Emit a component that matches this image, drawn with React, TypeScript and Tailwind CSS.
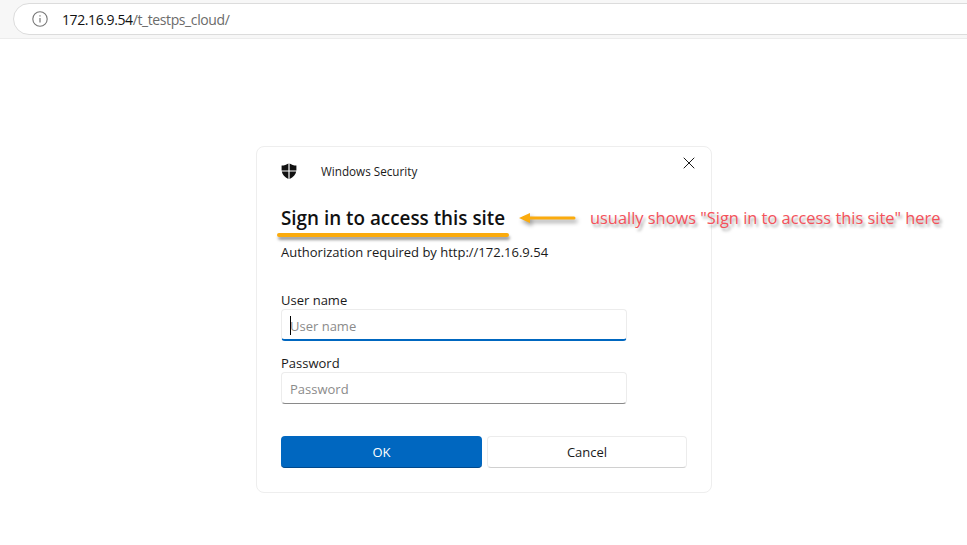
import { X } from 'lucide-react';

const font = "[font-family:'Open_Sans','Noto_Sans',sans-serif]";

function ShieldIcon() {
    return (
        <svg width="16" height="16" viewBox="0 0 16 16" className="-mt-[2px] block">
            <path
                fill="#111"
                d="M7.4 0.4C5.6 1.7 3.2 2.4 0.6 2.5V7.4H7.4ZM8.6 0.4V7.4H15.4V2.5C12.8 2.4 10.4 1.7 8.6 0.4ZM0.8 8.6C1.4 12 3.7 14.4 7.4 15.9V8.6ZM8.6 8.6V15.9C12.3 14.4 14.6 12 15.2 8.6Z"
            />
        </svg>
    );
}

function InfoIcon() {
    return (
        <svg width="16" height="16" viewBox="0 0 16 16" fill="none" className="block">
            <circle cx="8" cy="8" r="7.2" stroke="#777" strokeWidth="1.1" />
            <path d="M8 7V11.6" stroke="#777" strokeWidth="1.2" />
            <path d="M8 4.3V5.6" stroke="#777" strokeWidth="1.2" />
        </svg>
    );
}

function Field({ label, focused }: { label: string; focused?: boolean }) {
    return (
        <div>
            <div className="h-[19px] text-[13px] leading-[20px] text-[#1a1a1a]">{label}</div>
            <div
                className={`relative flex h-[32px] w-[346px] items-center rounded-[4px] border border-[#ececec] pl-[8px] pt-[4px] text-[13px] ${
                    focused ? 'border-b-2 border-b-[#0067c0]' : 'border-b border-b-[#8a8a8a]'
                }`}
            >
                {focused && <span className="absolute left-[8px] top-[6px] h-[19px] w-px bg-black" />}
                <span className="text-[#8b8b8b]">{label}</span>
            </div>
        </div>
    );
}

export default function App() {
    return (
        <div className={`relative h-[545px] w-[967px] overflow-hidden bg-white ${font}`}>
            <div className="h-[39px] border-b border-[#ececec] bg-[#f7f7f7] pl-[13px] pt-[3px]">
                <div className="flex h-[32px] w-[1000px] items-center rounded-l-full border border-[#dcdcdc] bg-white pl-[18px]">
                    <InfoIcon />
                    <div className="ml-[14px] text-[14px] tracking-[-0.4px] text-[#6b6b6b]">
                        <span className="text-[#111]">172.16.9.54</span>/t_testps_cloud/
                    </div>
                </div>
            </div>

            <div className="relative ml-[256px] mt-[107px] h-[347px] w-[456px] rounded-[8px] border border-[#eeeeee] bg-white pl-[24px]">
                <X size={20} strokeWidth={1.2} className="absolute right-[12px] top-[6px] text-[#1a1a1a]" />
                <div className="flex h-[48px] items-center pt-[2px]">
                    <ShieldIcon />
                    <span className="ml-[24px] text-[11.7px] text-[#1a1a1a]">Windows Security</span>
                </div>
                <h1 className="mt-[8px] h-[30px] text-[18.85px] font-semibold leading-[30px] text-[#111]">Sign in to access this site</h1>
                <p className="mt-[9px] h-[20px] text-[13px] leading-[20px] text-[#1a1a1a]">Authorization required by http://172.16.9.54</p>
                <div className="mt-[28px] flex flex-col gap-[12px]">
                    <Field label="User name" focused />
                    <Field label="Password" />
                </div>
                <div className="mt-[32px] flex gap-[5px] text-[13px]">
                    <button className="h-[32px] w-[201px] rounded-[4px] border-b border-[#00498c] bg-[#0067c0] pt-[2px] text-white">OK</button>
                    <button className="h-[32px] w-[200px] rounded-[4px] border border-[#ececec] border-b-[#d0d0d0] pt-[2px] text-[#1a1a1a]">Cancel</button>
                </div>
            </div>

            {/* annotations drawn over the screenshot */}
            <div className="absolute left-[277px] top-[233px] h-[4px] w-[232px] rounded-full bg-[#fbab0d] shadow-[1px_3px_3px_rgba(0,0,0,0.4)]" />
            <svg width="60" height="16" viewBox="0 0 60 16" className="absolute left-[518px] top-[210px] drop-shadow-[2px_3px_2px_rgba(0,0,0,0.4)]">
                <path d="M1 8L12 3V6.5H56a1.5 1.5 0 0 1 0 3H12V13Z" fill="#fbab0d" />
            </svg>
            <div className="absolute left-[590px] top-[207px] text-[16.4px] leading-[22px] whitespace-nowrap text-[#f4515a] [text-shadow:2px_3px_3px_rgba(0,0,0,0.35)]">
                usually shows "Sign in to access this site" here
            </div>
        </div>
    );
}
